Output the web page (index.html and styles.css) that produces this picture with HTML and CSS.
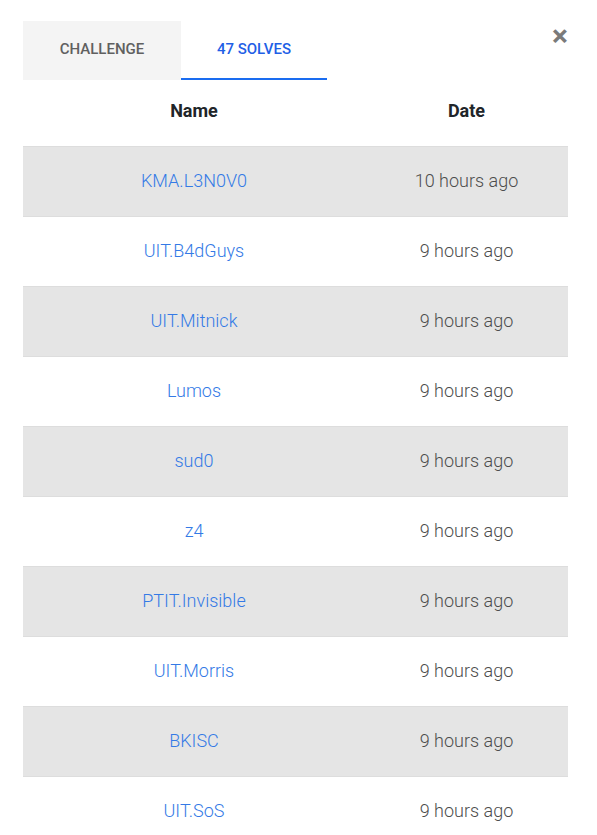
FILE: index.html
```html
<!DOCTYPE html>
<html>
<head>
<meta charset="utf-8">
<link rel="stylesheet" href="styles.css">
</head>
<body>
<div class="modal">
  <div class="top">
    <div class="tabs">
      <div class="tab">Challenge</div>
      <div class="tab active">47 Solves</div>
    </div>
    <button class="close">&times;</button>
  </div>
  <table class="solves">
    <thead>
      <tr><th class="c-name">Name</th><th class="c-date">Date</th></tr>
    </thead>
    <tbody>
      <tr><td class="c-name"><a>KMA.L3N0V0</a></td><td class="c-date">10 hours ago</td></tr>
      <tr><td class="c-name"><a>UIT.B4dGuys</a></td><td class="c-date">9 hours ago</td></tr>
      <tr><td class="c-name"><a>UIT.Mitnick</a></td><td class="c-date">9 hours ago</td></tr>
      <tr><td class="c-name"><a>Lumos</a></td><td class="c-date">9 hours ago</td></tr>
      <tr><td class="c-name"><a>sud0</a></td><td class="c-date">9 hours ago</td></tr>
      <tr><td class="c-name"><a>z4</a></td><td class="c-date">9 hours ago</td></tr>
      <tr><td class="c-name"><a>PTIT.Invisible</a></td><td class="c-date">9 hours ago</td></tr>
      <tr><td class="c-name"><a>UIT.Morris</a></td><td class="c-date">9 hours ago</td></tr>
      <tr><td class="c-name"><a>BKISC</a></td><td class="c-date">9 hours ago</td></tr>
      <tr><td class="c-name"><a>UIT.SoS</a></td><td class="c-date">9 hours ago</td></tr>
    </tbody>
  </table>
</div>
</body>
</html>
```
FILE: styles.css
```css
html, body {
  margin: 0;
  padding: 0;
  background: #fff;
  font-family: Roboto, "Liberation Sans", sans-serif;
}
.modal {
  padding: 21px 29px 0 23px;
}
.top {
  display: flex;
  justify-content: space-between;
  align-items: flex-start;
}
.tabs {
  display: flex;
}
.tab {
  height: 57px;
  line-height: 56px;
  text-transform: uppercase;
  font-size: 15px;
  font-weight: 500;
  color: #606060;
  text-align: center;
  border-bottom: 2px solid transparent;
  background: #f4f4f4;
  width: 158px;
}
.tab.active {
  background: #fff;
  color: #1f5fe6;
  border-bottom-color: #1a6cf0;
  width: 146px;
}
.close {
  border: 0;
  background: none;
  padding: 0;
  margin-top: 0;
  font-family: Roboto, "Liberation Sans", sans-serif;
  font-size: 30px;
  font-weight: 700;
  line-height: 30px;
  color: #7a7a7a;
}
.solves {
  width: 545px;
  border-collapse: collapse;
  font-size: 18px;
}
.solves th {
  font-weight: 700;
  color: #212529;
  padding: 19px 0 23px;
  line-height: 24px;
}
.solves td {
  padding: 22px 0 23px;
  line-height: 24px;
  font-weight: 300;
  color: #4d4d4d;
  border-top: 1px solid #dddddd;
  text-align: center;
}
.c-name {
  width: 342px;
  text-align: center;
}
.c-date {
  text-align: center;
}
.solves tbody tr:nth-child(odd) {
  background: #e5e5e5;
}
.solves a {
  color: #347ae6;
}
```
